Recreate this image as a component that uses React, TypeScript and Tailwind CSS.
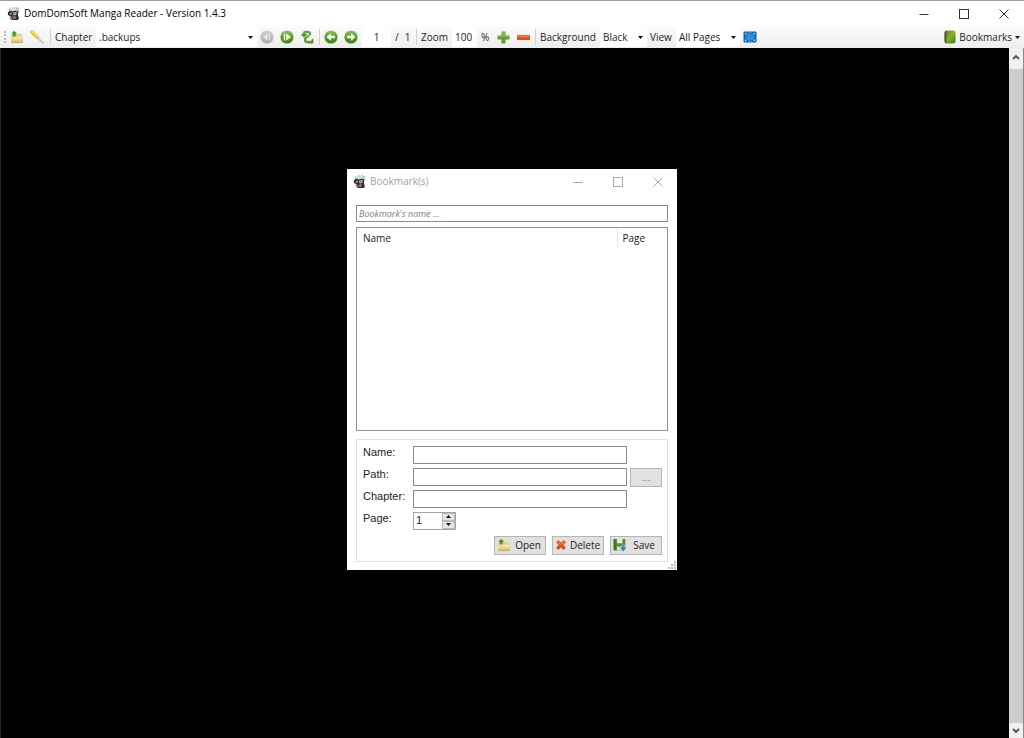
import { useState } from 'react';
import type { ReactNode } from 'react';

function AppIcon() {
  return (
    <svg width="14" height="15" viewBox="0 0 14 15" className="shrink-0">
      <path d="M1.500 5 L2.500 2 L4.500 3 L5.500 .8 L7.500 2 L9.500 .5 L10.200 2 L13 1.800 L11.500 4 L12.500 6 L8 7 L3 6 Z" fill="#b4c8d2" />
      <path d="M4.500 2.500 L6.500 3.200 L9 1.800 L8.500 4 L6 5 Z" fill="#eaf1f4" />
      <path d="M.8 6.500 L3 4.800 L5 5.500 L8 4.800 L11.500 5.500 L10.800 8.500 L12 13 L10 14 L5 14 L3.800 10.500 L1 9 Z" fill="#2b2c31" />
      <path d="M6 6.500 L9.800 5.800 L9 9 L6.500 9.500 Z" fill="#d8b9a2" />
      <path d="M2.500 7.500 L5 6.500 L4.800 8.500 L3 9 Z" fill="#a6a8ad" />
      <path d="M6.800 7.300 L8.500 7 L8 8.300 Z" fill="#3b2f2c" />
      <path d="M5 11 L8 10 L9.500 11.800 L7 13.300 Z" fill="#b0714f" />
      <path d="M2.300 10.500 L4.300 10.500 L5.300 13.700 L3.500 14 Z" fill="#8a8c92" />
    </svg>
  );
}

function FolderIcon() {
  return (
    <svg width="14" height="14" viewBox="0 0 14 14" className="shrink-0">
      <defs>
        <linearGradient id="folder" x1="0" y1="0" x2="0" y2="1">
          <stop offset="0" stopColor="#f8eebb" />
          <stop offset="1" stopColor="#d6b95c" />
        </linearGradient>
      </defs>
      <path d="M1 5 H5 L6.500 4 H12.500 V12.500 H1 Z" fill="#e0d29a" />
      <path d="M.8 7.800 H6 L7 6.800 H13.300 L12.800 12.800 H1.200 Z" fill="url(#folder)" />
      <path d="M1.200 12.600 H12.800" stroke="#c2a655" strokeWidth=".8" />
      <path d="M4.200 .7 L7.300 3.700 H5.700 V6.300 H2.700 V3.700 H1.200 Z" fill="#4c9a1d" />
    </svg>
  );
}

function WandIcon() {
  return (
    <svg width="14" height="14" viewBox="0 0 14 14" className="shrink-0">
      <path d="M7 7 L12.800 12.600" stroke="#b3bcc7" strokeWidth="2" strokeLinecap="round" />
      <path d="M7 6.500 L12.500 12" stroke="#e3e8ee" strokeWidth=".8" />
      <path d="M2 2 L6.800 6.800" stroke="#e9b41b" strokeWidth="3.200" strokeLinecap="round" />
      <path d="M2.200 1.700 L6.700 6.200" stroke="#ffe35c" strokeWidth="1.400" strokeLinecap="round" />
    </svg>
  );
}

function RoundIcon({ gray, children }: { gray?: boolean; children: ReactNode }) {
  return (
    <svg width="14" height="14" viewBox="0 0 14 14" className="shrink-0">
      <defs>
        <linearGradient id="ball" x1="0" y1="0" x2="0" y2="1">
          <stop offset="0" stopColor="#93c65a" />
          <stop offset=".5" stopColor="#5a9f25" />
          <stop offset="1" stopColor="#3d8510" />
        </linearGradient>
        <linearGradient id="grayBall" x1="0" y1="0" x2="0" y2="1">
          <stop offset="0" stopColor="#d4d4d4" />
          <stop offset="1" stopColor="#a8a8a8" />
        </linearGradient>
      </defs>
      <circle cx="7" cy="7" r="6.600" fill={gray ? 'url(#grayBall)' : 'url(#ball)'} />
      {children}
    </svg>
  );
}

function RefreshIcon() {
  return (
    <svg width="14" height="14" viewBox="0 0 14 14" className="shrink-0">
      <path d="M9.800 5.500 V3.500 Q9.800 2 8 2 H5.500 Q4 2 4 3.500 V4.500" fill="none" stroke="#6aa83a" strokeWidth="2.400" />
      <path d="M.8 4 H7.400 L4 7.800 Z" fill="#4b911c" />
      <path d="M5.200 8 V10.500 Q5.200 12 7 12 H10" fill="none" stroke="#5b9f2b" strokeWidth="2.400" />
      <path d="M9 5.500 L5 8.500" stroke="#5b9f2b" strokeWidth="2" />
      <path d="M8.500 13.600 H13.300 V8 Z" fill="#4b911c" />
    </svg>
  );
}

function PlusIcon() {
  return (
    <svg width="13" height="13" viewBox="0 0 13 13" className="shrink-0">
      <path d="M4.500 .5 H8.500 V4.500 H12.500 V8.500 H8.500 V12.500 H4.500 V8.500 H.5 V4.500 H4.500 Z" fill="#5d9c33" />
      <path d="M5 1 H8 V5 H12 V6.300 H1 V5 H5 Z" fill="#7fb356" />
    </svg>
  );
}

function MinusIcon() {
  return (
    <svg width="13" height="13" viewBox="0 0 13 13" className="shrink-0">
      <rect x="0" y="4" width="13" height="5" rx=".6" fill="#d6521c" />
      <rect x=".6" y="4.500" width="11.800" height="1.800" fill="#ec8150" />
    </svg>
  );
}

function FullScreenIcon() {
  return (
    <svg width="14" height="12" viewBox="0 0 14 12" className="shrink-0">
      <rect x=".5" y=".5" width="13" height="11" rx="1" fill="#1468b8" />
      <rect x="3" y="3" width="8" height="6" fill="#2b8ddc" />
      <path d="M2 2 H3.800 L2 3.800 Z M12 2 V3.800 L10.200 2 Z M2 10 V8.200 L3.800 10 Z M12 10 H10.200 L12 8.200 Z" fill="#d9ecfb" />
      <path d="M5.500 1.800 H6.500 M7.500 1.800 H8.500 M5.500 10.200 H6.500 M7.500 10.200 H8.500" stroke="#8fc2ec" />
    </svg>
  );
}

function BookIcon() {
  return (
    <svg width="12" height="14" viewBox="0 0 12 14" className="shrink-0">
      <defs>
        <linearGradient id="book" x1="0" y1="0" x2="1" y2="1">
          <stop offset="0" stopColor="#69962e" />
          <stop offset=".5" stopColor="#79b52c" />
          <stop offset="1" stopColor="#3f7a12" />
        </linearGradient>
      </defs>
      <path d="M3 .5 H9 Q11.500 .5 11.500 3 V11 Q11.500 13.500 9 13.500 H3 Q.5 13.500 .5 11 V3 Q.5 .5 3 .5 Z" fill="url(#book)" />
      <path d="M2.500 .6 Q.5 .8 .5 3 V11 Q.5 13.200 2.500 13.400 Z" fill="#4a5f35" />
      <path d="M3.300 1.500 H5.300 V7.500 L4.300 6.500 L3.300 7.500 Z" fill="#b5762a" />
    </svg>
  );
}

function DeleteIcon() {
  return (
    <svg width="12" height="12" viewBox="0 0 12 12" className="shrink-0">
      <path d="M1 3.200 L3.400 1 L6 3.500 L8.600 1 L11 3.200 L8.500 6 L11 8.800 L8.600 11 L6 8.500 L3.400 11 L1 8.800 L3.500 6 Z" fill="#d9501f" />
      <path d="M1.800 3.200 L3.400 1.800 L6 4.500 L8.600 1.800 L10.200 3.200 L7.700 5.500 L4.300 5.500 Z" fill="#ea7a45" />
    </svg>
  );
}

function SaveIcon() {
  return (
    <svg width="14" height="14" viewBox="0 0 14 14" className="shrink-0">
      <path d="M.7 1 H12.300 V11.500 L11 12.500 H2 L.7 11.500 Z" fill="#4f8f2e" />
      <path d="M.7 1 H2.500 V12.500 H2 L.7 11.500 Z" fill="#35701a" />
      <path d="M4 1 H9.500 V5.300 H4 Z" fill="#e3ecdc" />
      <path d="M4 8.500 H9 V12.500 H4 Z" fill="#d5e2cb" />
      <path d="M8.800 6.800 H11.500 V9.300 H13.800 L10.200 13.600 L6.500 9.300 H8.800 Z" fill="#3a7cc4" stroke="#dce9f6" strokeWidth=".4" />
    </svg>
  );
}

function Caret() {
  return (
    <svg width="5" height="3" viewBox="0 0 5 3" className="pointer-events-none shrink-0">
      <path d="M0 0 H5 L2.500 3 Z" fill="#111111" />
    </svg>
  );
}

function Separator() {
  return <div className="h-4 w-px shrink-0 bg-[#cfcfcf]" />;
}

function ToolButton({ label, children }: { label: string; children: ReactNode }) {
  return (
    <button type="button" aria-label={label} className="flex h-5 w-5 shrink-0 items-center justify-center hover:bg-[#d8e9f8]">
      {children}
    </button>
  );
}

interface ToolSelectProps {
  id: string;
  options: string[];
  widthClass: string;
}

function ToolSelect({ id, options, widthClass }: ToolSelectProps) {
  return (
    <div className={`flex h-5 shrink-0 items-center bg-white pr-1 ${widthClass}`}>
      <select id={id} className="h-5 min-w-0 flex-1 appearance-none bg-transparent pl-[3px] outline-none">
        {options.map(option => (
          <option key={option}>{option}</option>
        ))}
      </select>
      <Caret />
    </div>
  );
}

function WindowButtons({ color }: { color: string }) {
  return (
    <div className="flex items-center gap-[30px]">
      <button type="button" aria-label="Minimize">
        <svg width="10" height="10" viewBox="0 0 10 10">
          <path d="M.5 5.500 H9.500" stroke={color} />
        </svg>
      </button>
      <button type="button" aria-label="Maximize">
        <svg width="10" height="10" viewBox="0 0 10 10">
          <rect x=".5" y=".5" width="9" height="9" fill="none" stroke={color} />
        </svg>
      </button>
      <button type="button" aria-label="Close">
        <svg width="10" height="10" viewBox="0 0 10 10">
          <path d="M.5 .5 L9.500 9.500 M9.500 .5 L.5 9.500" stroke={color} />
        </svg>
      </button>
    </div>
  );
}

function Toolbar() {
  return (
    <div className="flex h-[22px] shrink-0 items-center bg-linear-to-b from-[#fcfcfc] to-[#ededed] text-[10px] text-[#1c1c1c]">
      <div className="ml-1 h-3 w-[3px] shrink-0 border-l-2 border-dotted border-[#bcbcbc]" />
      <div className="flex w-[43px] shrink-0">
        <ToolButton label="Open folder"><FolderIcon /></ToolButton>
        <ToolButton label="Options"><WandIcon /></ToolButton>
      </div>
      <Separator />
      <label htmlFor="chapter" className="w-[45px] shrink-0 pl-1">Chapter</label>
      <ToolSelect id="chapter" options={['.backups']} widthClass="w-[161px]" />
      <div className="flex w-[62px] shrink-0">
        <ToolButton label="Previous chapter">
          <RoundIcon gray>
            <path d="M7.500 3.500 V10.500 L3 7 Z M8.800 3.500 H10 V10.500 H8.800 Z" fill="#e6e6e6" />
          </RoundIcon>
        </ToolButton>
        <ToolButton label="Next chapter">
          <RoundIcon>
            <path d="M6.300 3.500 V10.500 L11 7 Z M3.800 3.500 H5.200 V10.500 H3.800 Z" fill="#ffffff" />
          </RoundIcon>
        </ToolButton>
        <ToolButton label="Refresh"><RefreshIcon /></ToolButton>
      </div>
      <Separator />
      <div className="flex w-[42px] shrink-0 pl-px">
        <ToolButton label="Previous page">
          <RoundIcon>
            <path d="M6.800 3.200 V5.700 H11 V8.300 H6.800 V10.800 L2.600 7 Z" fill="#ffffff" />
          </RoundIcon>
        </ToolButton>
        <ToolButton label="Next page">
          <RoundIcon>
            <path d="M7.200 3.200 V5.700 H3 V8.300 H7.200 V10.800 L11.400 7 Z" fill="#ffffff" />
          </RoundIcon>
        </ToolButton>
      </div>
      <input aria-label="Current page" defaultValue="1" className="h-5 w-[29px] shrink-0 bg-white text-center outline-none" />
      <span className="flex w-[25px] shrink-0 gap-[6px] pl-1">
        <span>/</span>
        <span>1</span>
      </span>
      <Separator />
      <label htmlFor="zoom" className="w-[35px] shrink-0 pl-1">Zoom</label>
      <input id="zoom" defaultValue="100" className="h-5 w-[25px] shrink-0 bg-white pl-[3px] outline-none" />
      <span className="w-4 shrink-0 pl-1">%</span>
      <div className="flex w-[42px] shrink-0">
        <ToolButton label="Zoom in"><PlusIcon /></ToolButton>
        <ToolButton label="Zoom out"><MinusIcon /></ToolButton>
      </div>
      <Separator />
      <label htmlFor="background" className="w-16 shrink-0 pl-1">Background</label>
      <ToolSelect id="background" options={['Black', 'White', 'Gray']} widthClass="w-[47px]" />
      <label htmlFor="view" className="w-[29px] shrink-0 pl-[3px]">View</label>
      <ToolSelect id="view" options={['All Pages', 'Single Page']} widthClass="w-16" />
      <ToolButton label="Full screen"><FullScreenIcon /></ToolButton>
      <button type="button" className="mr-1 ml-auto flex h-5 items-center gap-[3px]">
        <BookIcon />
        <span>Bookmarks</span>
        <Caret />
      </button>
    </div>
  );
}

function ScrollBar() {
  return (
    <div className="flex w-[15px] shrink-0 flex-col border-r border-[#8a8a8a] bg-[#f0f0f0]">
      <button type="button" aria-label="Scroll up" className="flex h-[21px] items-center justify-center pb-1">
        <svg width="8" height="6" viewBox="0 0 8 6">
          <path d="M1 5 L4 2 L7 5" fill="none" stroke="#505050" strokeWidth="1.800" />
        </svg>
      </button>
      <div className="flex-1 bg-[#cdcdcd]" />
      <button type="button" aria-label="Scroll down" className="flex h-[15px] items-center justify-center">
        <svg width="8" height="6" viewBox="0 0 8 6">
          <path d="M1 1 L4 4 L7 1" fill="none" stroke="#505050" strokeWidth="1.800" />
        </svg>
      </button>
    </div>
  );
}

function FieldRow({ id, label, children }: { id: string; label: string; children: ReactNode }) {
  return (
    <div className="flex h-[22px] items-start">
      <label htmlFor={id} className="w-[50px] shrink-0 leading-3">{label}</label>
      {children}
    </div>
  );
}

function DialogButton({ label, icon }: { label: string; icon: ReactNode }) {
  return (
    <button
      type="button"
      className="flex h-[19px] w-[52px] items-center border border-[#b4b4b4] bg-[#e1e1e1] pl-[2px] font-['Open_Sans',sans-serif] text-[10px] hover:bg-[#e5f1fb]"
    >
      {icon}
      <span className="flex-1 text-center">{label}</span>
    </button>
  );
}

function BookmarkDialog() {
  const [page, setPage] = useState(1);
  const fieldClass = 'h-[18px] w-[214px] border border-[#8a8a8a] bg-white px-1 outline-none';

  return (
    <div
      role="dialog"
      aria-label="Bookmark(s)"
      className="relative flex h-[401px] w-[330px] flex-col bg-white font-['Liberation_Sans',sans-serif] text-[11px] text-[#1c1c1c]"
    >
      <div className="flex h-[26px] shrink-0 items-center gap-[3px] pr-[14px] pl-[6px] font-['Open_Sans',sans-serif] text-[10px] text-[#a0a0a0]">
        <AppIcon />
        <span className="flex-1">Bookmark(s)</span>
        <WindowButtons color="#a8a8a8" />
      </div>

      <div className="flex flex-1 flex-col px-[9px] pt-[10px] pb-2">
        <input
          aria-label="Bookmark's name"
          placeholder="Bookmark's name ..."
          className="mb-[5px] h-[17px] shrink-0 border border-[#8a8a8a] px-[2px] font-['Open_Sans',sans-serif] text-[9px] italic outline-none placeholder:text-[#808080]"
        />

        <div className="mb-2 flex-1 border border-[#8f939c]">
          <table className="w-full table-fixed font-['Open_Sans',sans-serif] text-[10px]">
            <thead>
              <tr className="h-[21px] text-left">
                <th className="pl-[6px] font-normal">Name</th>
                <th className="w-[50px] border-l border-[#e5e5e5] pl-[5px] font-normal">Page</th>
              </tr>
            </thead>
            <tbody />
          </table>
        </div>

        <form className="shrink-0 border border-[#e0e0e0] px-[5px] py-[6px]" onSubmit={e => e.preventDefault()}>
          <div className="pl-px">
            <FieldRow id="bm-name" label="Name:">
              <input id="bm-name" className={fieldClass} />
            </FieldRow>
            <FieldRow id="bm-path" label="Path:">
              <input id="bm-path" className={fieldClass} />
              <button type="button" className="ml-[3px] h-[19px] flex-1 border border-[#b4b4b4] bg-[#e1e1e1] text-[#808080]">
                ...
              </button>
            </FieldRow>
            <FieldRow id="bm-chapter" label="Chapter:">
              <input id="bm-chapter" className={fieldClass} />
            </FieldRow>
            <FieldRow id="bm-page" label="Page:">
              <div className="flex h-[18px] w-[43px] border border-[#a5a5a5]">
                <input
                  id="bm-page"
                  type="number"
                  value={page}
                  onChange={e => setPage(Number(e.target.value))}
                  className="min-w-0 flex-1 [appearance:textfield] pl-[2px] outline-none [&::-webkit-inner-spin-button]:appearance-none"
                />
                <div className="flex w-[13px] flex-col bg-[#e4e4e4]">
                  <button
                    type="button"
                    aria-label="Increase page"
                    onClick={() => setPage(page + 1)}
                    className="flex h-2 items-center justify-center border border-[#b8b8b8]"
                  >
                    <span className="flex rotate-180"><Caret /></span>
                  </button>
                  <button
                    type="button"
                    aria-label="Decrease page"
                    onClick={() => setPage(Math.max(1, page - 1))}
                    className="flex h-2 items-center justify-center border border-[#b8b8b8]"
                  >
                    <Caret />
                  </button>
                </div>
              </div>
            </FieldRow>
          </div>
          <div className="mt-[2px] flex justify-end gap-[6px]">
            <DialogButton label="Open" icon={<FolderIcon />} />
            <DialogButton label="Delete" icon={<DeleteIcon />} />
            <DialogButton label="Save" icon={<SaveIcon />} />
          </div>
        </form>
      </div>

      {/* resize grip */}
      <svg width="8" height="8" viewBox="0 0 8 8" className="absolute right-px bottom-px">
        <path d="M6 0 h2 v2 h-2 Z M3 3 h2 v2 h-2 Z M6 3 h2 v2 h-2 Z M0 6 h2 v2 h-2 Z M3 6 h2 v2 h-2 Z M6 6 h2 v2 h-2 Z" fill="#bdbdbd" />
      </svg>
    </div>
  );
}

export default function App() {
  return (
    <div className="flex h-screen flex-col overflow-hidden bg-black font-['Open_Sans',sans-serif]">
      <header className="flex h-[26px] shrink-0 items-center gap-[3px] border-t border-[#9c9c9c] bg-white pr-[15px] pl-[7px] text-[10px] text-black">
        <AppIcon />
        <h1 className="flex-1">DomDomSoft Manga Reader - Version 1.4.3</h1>
        <WindowButtons color="#333333" />
      </header>
      <Toolbar />
      <main className="flex min-h-0 flex-1 justify-end border-l border-[#2a2a2a] bg-black">
        <ScrollBar />
      </main>
      <div className="pointer-events-none fixed inset-0 flex items-center justify-center">
        <div className="pointer-events-auto">
          <BookmarkDialog />
        </div>
      </div>
    </div>
  );
}
